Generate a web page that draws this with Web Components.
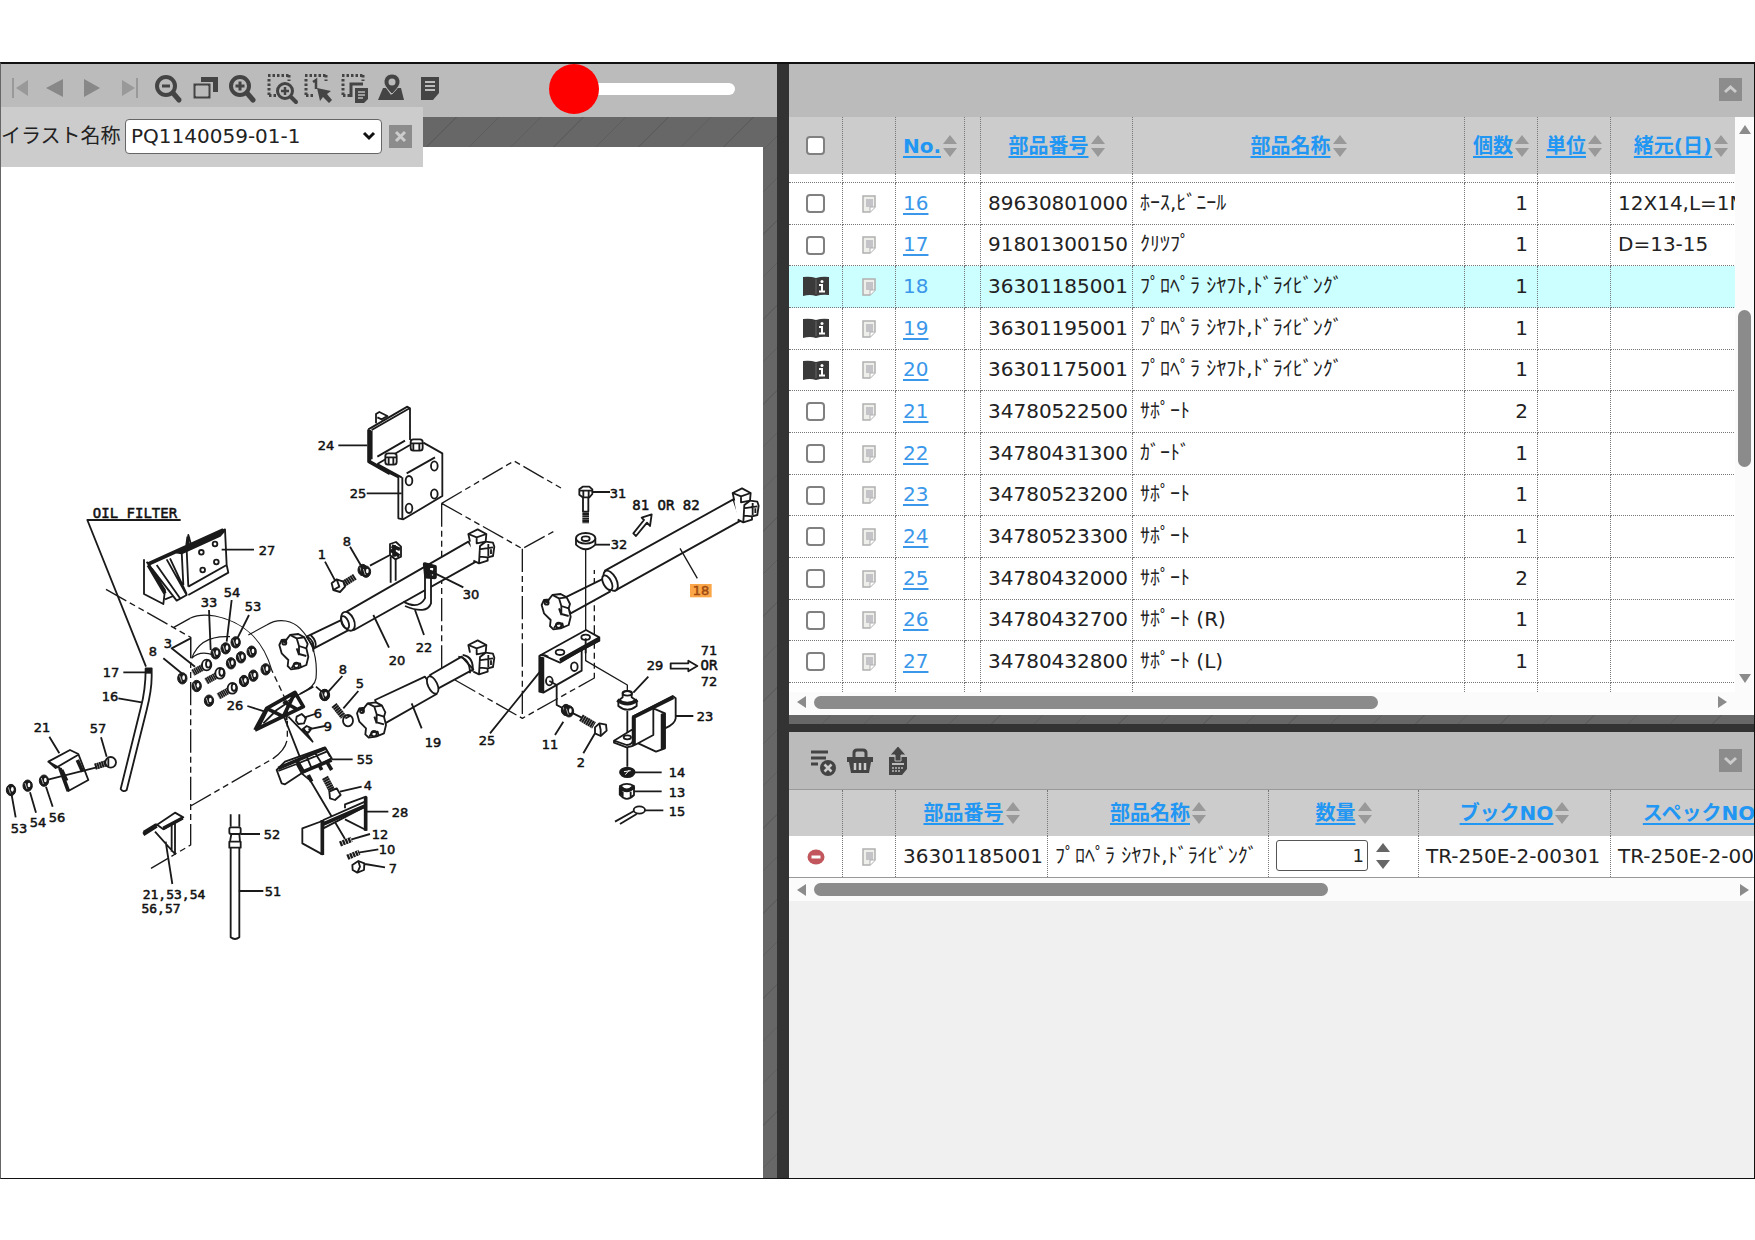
<!DOCTYPE html>
<html lang="ja">
<head>
<meta charset="utf-8">
<title>Parts catalog</title>
<style>
  html, body { height: 100%; }
  body {
    margin: 0; padding: 62px 0 61px; box-sizing: border-box; background: #fff; color: #222;
    font: 20px/28px "DejaVu Sans", "Noto Sans CJK JP", sans-serif;
  }
</style>
</head>
<body>
<catalog-app>
  <illustration-pane slot="left"></illustration-pane>
  <parts-list slot="top"></parts-list>
  <order-list slot="bottom"></order-list>
</catalog-app>

<script>
const define = (name, html, setup) => customElements.define(name, class extends HTMLElement {
  connectedCallback() {
    if (this.shadowRoot) return;
    const root = this.attachShadow({ mode: "open" });
    root.innerHTML = typeof html === "function" ? html(this) : html;
    if (setup) setup(root, this);
  }
});

/* ---------- icons ---------- */
const marquee = '<path d="M3 2.500H25M4 6V23M24 2V8M4 22.500H12" fill="none" stroke="#444" stroke-width="3" stroke-dasharray="2.500 2"/>';
const ICONS = {
  first: '<path d="M7 5V25" stroke="#999" stroke-width="2"/><path d="M22 7V23L10 15Z" fill="#999"/>',
  prev: '<path d="M20 6V24L3 15Z" fill="#888"/>',
  next: '<path d="M4 6V24L20 15Z" fill="#888"/>',
  last: '<path d="M5 7V23L18 15Z" fill="#999"/><path d="M20 5V25" stroke="#999" stroke-width="2"/>',
  zoomout: '<circle cx="12" cy="13" r="9" fill="none" stroke="#444" stroke-width="4"/><path d="M19 20L25 27" stroke="#444" stroke-width="5" stroke-linecap="round"/><path d="M8 13H16" stroke="#444" stroke-width="3"/>',
  zoomin: '<circle cx="12" cy="13" r="9" fill="none" stroke="#444" stroke-width="4"/><path d="M19 20L25 27" stroke="#444" stroke-width="5" stroke-linecap="round"/><path d="M7.500 13H16.500M12 8.500V17.500" stroke="#444" stroke-width="3"/>',
  windows: '<path d="M10 4H27V19H22V9H10Z" fill="#444"/><path d="M2 10H20V26H2ZM5 13V23H17V13Z" fill="#444" stroke="#bbb" stroke-width="1" fill-rule="evenodd"/>',
  areazoom: marquee + '<circle cx="20" cy="18" r="7.500" fill="#bbb" stroke="#444" stroke-width="3"/><path d="M26 24L31 29" stroke="#444" stroke-width="4" stroke-linecap="round"/><path d="M16 18H24M20 14V22" stroke="#444" stroke-width="2.500"/>',
  areapick: marquee + '<path d="M11 9L14 7V16" fill="none" stroke="#444" stroke-width="2.500"/><path d="M15 15L29 18L25 21L30 27L27 30L21 24L18 28Z" fill="#444"/>',
  areacopy: marquee + '<path d="M12 24V11H24" fill="none" stroke="#444" stroke-width="3"/><path d="M16 15H29V26L25 30H16Z" fill="#444"/><path d="M19 19H26M19 22H26M19 25H24" stroke="#bbb" stroke-width="1.500"/>',
  map: '<path d="M7 15L2 27H28L25 15H21L15 22L10 15Z" fill="#444"/><path d="M16 1C11 1 8 5 8 9C8 13 13 18 16 21C19 18 24 13 24 9C24 5 21 1 16 1Z" fill="#444" stroke="#bbb" stroke-width="1"/><circle cx="16" cy="9" r="3.500" fill="#bbb"/>',
  note: '<path d="M8 4H26V20L20 27H8Z" fill="#444"/><path d="M12 9H22M12 13H22M12 17H22" stroke="#bbb" stroke-width="2"/>',
  clear: '<path d="M2 6H19M2 12H17M2 18H9" stroke="#444" stroke-width="3"/><circle cx="19" cy="22" r="8" fill="#444"/><path d="M15.500 18.500L22.500 25.500M22.500 18.500L15.500 25.500" stroke="#ccc" stroke-width="2.500"/>',
  basket: '<path d="M8 13V7Q8 4 11 4H17Q20 4 20 7V13" fill="none" stroke="#444" stroke-width="3"/><path d="M1 11H27V16H25L23 27H5L3 16H1Z" fill="#444"/><path d="M9 17V24M14 17V24M19 17V24" stroke="#ccc" stroke-width="2.500"/>',
  exportfile: '<path d="M6 11H24V23L19 29H6Z" fill="#444"/><path d="M15 0L23 9H18V15H12V9H7Z" fill="#444" stroke="#bbb" stroke-width="1"/><path d="M9 18H21" stroke="#bbb" stroke-width="2"/><path d="M9 22H20M9 25H18" stroke="#bbb" stroke-width="1.500" stroke-dasharray="2 1"/>'
};

define("icon-button", el => `
  <style>
    :host { display: block; width: 30px; height: 30px; }
    button { display: block; width: 30px; height: 30px; padding: 0; border: 0; background: none; }
    svg { display: block; overflow: visible; }
  </style>
  <button type="button" aria-label="${el.getAttribute("icon")}"><svg width="30" height="30" viewBox="0 0 30 30">${ICONS[el.getAttribute("icon")]}</svg></button>`);

/* Small square button: close, collapse up, collapse down */
const MARKS = { close: "M7 7L16 16M16 7L7 16", up: "M6 14L11.500 9L17 14", down: "M6 9L11.500 14L17 9" };
define("square-button", el => `
  <style>
    :host { display: block; width: 23px; height: 23px; }
    button { display: block; width: 23px; height: 23px; padding: 0; border: 0; background: #8c8c8c; }
    svg { display: block; }
  </style>
  <button type="button" aria-label="${el.getAttribute("mark")}"><svg width="23" height="23" viewBox="0 0 23 23"><path d="${MARKS[el.getAttribute("mark")]}" fill="none" stroke="#ccc" stroke-width="3"/></svg></button>`);

define("tool-bar", `
  <style>
    :host { display: flex; align-items: center; box-sizing: border-box; height: 53px; background: #bbb; }
  </style><slot></slot>`);

define("sort-link", `
  <style>
    :host { display: inline-flex; align-items: center; gap: 2px; white-space: nowrap; }
    a { color: #2196f3; font-weight: bold; text-underline-offset: 3px; }
    svg { display: block; flex: none; }
  </style>
  <a href="#sort"><slot></slot></a>
  <svg width="14" height="22" viewBox="0 0 14 22" fill="#999"><path d="M0 9L7 0L14 9ZM0 13H14L7 22Z"/></svg>`);

define("scroll-bar", `
  <style>
    :host { display: flex; align-items: center; gap: 7px; height: 23px; padding: 0 8px; box-sizing: border-box; background: #fbfbfb; }
    :host([vertical]) { flex-direction: column; width: 19px; height: auto; padding: 7px 0 8px; }
    svg { flex: none; display: block; }
    :host([vertical]) svg { transform: rotate(90deg); }
    .track { flex: 1; display: flex; width: 100%; min-height: 0; }
    .thumb { height: 13px; width: var(--size); border-radius: 7px; background: #8b8b8b; }
    :host([vertical]) .track { flex-direction: column; align-items: center; }
    :host([vertical]) .lead { height: var(--start); }
    :host([vertical]) .thumb { width: 13px; height: var(--size); }
  </style>
  <svg width="10" height="12"><path d="M9 0V12L0 6Z" fill="#8b8b8b"/></svg>
  <div class="track"><div class="lead"></div><div class="thumb"></div></div>
  <svg width="10" height="12"><path d="M1 0V12L10 6Z" fill="#8b8b8b"/></svg>`);

const TABLE_CSS = `
  table { table-layout: fixed; border-spacing: 0; width: var(--table-width); }
  th, td { box-sizing: border-box; padding: 0 7px 2px; border-right: 1px dotted #777; text-align: left; font-weight: normal; white-space: nowrap; overflow: hidden; line-height: 26px; }
  th { background: #ccc; text-align: center; padding: 0; }
  td.c { text-align: center; padding: 0; }
  td.c svg, td.c input { display: block; margin: 0 auto; }
  td.n { text-align: right; padding-right: 9px; }
  a { color: #3a97ea; text-underline-offset: 3px; }
  input[type=checkbox] { appearance: none; display: block; margin: 0 auto; width: 19px; height: 19px; border: 2px solid #808080; border-radius: 4px; background: #fff; }
`;
const MEMO = '<svg width="14" height="18" viewBox="0 0 14 18"><path d="M1 1H13V12L8 17H1Z" fill="#eeeeea" stroke="#b0b0b0" stroke-width="1.500"/><path d="M4 4H11V12H4Z" fill="#c4c4c8"/><path d="M8 17V12H13" fill="#fff" stroke="#b0b0b0"/></svg>';
const BOOK = '<svg width="26" height="21" viewBox="0 0 26 21"><path d="M0 1Q7 0 13 2Q19 0 26 1V19Q19 18 13 20Q7 18 0 20Z" fill="#3a3a3a"/><path d="M13 3V18" stroke="#666" stroke-width="1"/><path d="M16 9H19V15M16 15.500H22" fill="none" stroke="#fff" stroke-width="2"/><circle cx="19" cy="5.500" r="1.500" fill="#fff"/></svg>';

/* ---------- upper right: parts table ---------- */
const SHAFT = "ﾌﾟﾛﾍﾟﾗ ｼﾔﾌﾄ,ﾄﾞﾗｲﾋﾞﾝｸﾞ";
const PARTS = [
  ["16", "89630801000", "ﾎｰｽ,ﾋﾞﾆｰﾙ", 1, "12X14,L=1M"],
  ["17", "91801300150", "ｸﾘﾂﾌﾟ", 1, "D=13-15"],
  ["18", "36301185001", SHAFT, 1, ""],
  ["19", "36301195001", SHAFT, 1, ""],
  ["20", "36301175001", SHAFT, 1, ""],
  ["21", "34780522500", "ｻﾎﾟｰﾄ", 2, ""],
  ["22", "34780431300", "ｶﾞｰﾄﾞ", 1, ""],
  ["23", "34780523200", "ｻﾎﾟｰﾄ", 1, ""],
  ["24", "34780523300", "ｻﾎﾟｰﾄ", 1, ""],
  ["25", "34780432000", "ｻﾎﾟｰﾄ", 2, ""],
  ["26", "34780432700", "ｻﾎﾟｰﾄ (R)", 1, ""],
  ["27", "34780432800", "ｻﾎﾟｰﾄ (L)", 1, ""]
];
const inBook = new Set(["18", "19", "20"]);
const edgeRow = cls => `<tr class="${cls}">${"<td></td>".repeat(9)}</tr>`;

define("parts-list", `
  <style>
    :host { display: flex; flex-direction: column; }
    tool-bar { justify-content: flex-end; padding: 0 12px 3px 0; }
    .area { display: flex; }
    .view { flex: 1; min-width: 0; overflow: hidden; --table-width: calc(100% + 17px); background: #fff; }
    ${TABLE_CSS}
    thead tr { height: 57px; }
    td { border-bottom: 1px dotted #777; }
    tbody tr { height: 42px; }
    tbody tr:nth-child(3n) { height: 41px; }
    tbody tr.before, tbody tr.after { height: 9px; }
    tbody tr.before td, tbody tr.after td { line-height: 0; }
    tr.after td { border-bottom: 0; }
    tr.on td { background: #cff; }
    tr.on a { text-decoration: none; }
    .across { --size: 63%; padding: 0 27px 3px 8px; }
  </style>
  <tool-bar><square-button mark="up"></square-button></tool-bar>
  <div class="area">
    <div class="view">
      <table>
        <colgroup><col style="width:54px"><col style="width:53px"><col style="width:69px"><col style="width:16px"><col style="width:152px"><col><col style="width:73px"><col style="width:73px"><col style="width:141px"></colgroup>
        <thead><tr>
          <th><input type="checkbox" aria-label="all"></th><th></th>
          <th><sort-link>No.</sort-link></th><th></th>
          <th><sort-link>部品番号</sort-link></th><th><sort-link>部品名称</sort-link></th>
          <th><sort-link>個数</sort-link></th><th><sort-link>単位</sort-link></th>
          <th><sort-link>緒元(日)</sort-link></th>
        </tr></thead>
        <tbody>
        ${edgeRow("before")}
        ${PARTS.map(([no, code, name, qty, spec]) => `<tr class="${no === "18" ? "on" : ""}">
          <td class="c">${inBook.has(no) ? BOOK : `<input type="checkbox" aria-label="${no}">`}</td>
          <td class="c">${MEMO}</td><td><a href="#${no}">${no}</a></td><td></td>
          <td>${code}</td><td>${name}</td><td class="n">${qty}</td><td></td><td>${spec}</td></tr>`).join("")}
        ${edgeRow("after")}
        </tbody>
      </table>
    </div>
    <scroll-bar vertical style="--start:32%;--size:30%"></scroll-bar>
  </div>
  <scroll-bar class="across"></scroll-bar>`);

/* ---------- lower right: order table ---------- */
define("order-list", `
  <style>
    :host { display: block; background: #f0f0f0; overflow: hidden; }
    tool-bar { height: 57px; padding: 0 12px 0 20px; gap: 7px; }
    square-button { margin-left: auto; }
    .view { overflow: hidden; --table-width: calc(100% + 50px); background: #fff; border-top: 1px solid #999; border-bottom: 1px solid #999; }
    ${TABLE_CSS}
    thead tr { height: 46px; }
    tbody tr { height: 41px; }
    .qty { display: flex; align-items: center; gap: 8px; }
    .qty input { box-sizing: border-box; width: 92px; height: 31px; padding: 0 3px; border: 1px solid #555; border-radius: 3px; font: inherit; font-size: 18px; color: inherit; text-align: right; }
    .qty svg { display: block; }
    .across { --size: 56%; padding: 0 5px 0 8px; }
  </style>
  <tool-bar>
    <icon-button icon="clear"></icon-button><icon-button icon="basket"></icon-button><icon-button icon="exportfile"></icon-button>
    <square-button mark="down"></square-button>
  </tool-bar>
  <div class="view">
    <table>
      <colgroup><col style="width:54px"><col style="width:53px"><col style="width:152px"><col style="width:221px"><col style="width:150px"><col><col style="width:193px"></colgroup>
      <thead><tr><th></th><th></th>
        <th><sort-link>部品番号</sort-link></th><th><sort-link>部品名称</sort-link></th>
        <th><sort-link>数量</sort-link></th><th><sort-link>ブックNO</sort-link></th><th><sort-link>スペックNO</sort-link></th>
      </tr></thead>
      <tbody><tr>
        <td class="c"><svg width="18" height="18" viewBox="0 0 18 18"><ellipse cx="9" cy="9" rx="8.500" ry="7.500" fill="#c1575c"/><path d="M4.500 9H13.500" stroke="#fff" stroke-width="3"/></svg></td>
        <td class="c">${MEMO}</td><td>36301185001</td><td>${SHAFT}</td>
        <td><div class="qty"><input type="text" value="1" aria-label="数量"><svg width="14" height="26" viewBox="0 0 14 26" fill="#666"><path d="M0 9L7 0L14 9ZM0 17H14L7 26Z"/></svg></div></td>
        <td>TR-250E-2-00301</td><td>TR-250E-2-00301</td>
      </tr></tbody>
    </table>
  </div>
  <scroll-bar class="across"></scroll-bar>`);

/* ---------- exploded view drawing ---------- */
const LABELS = [
  ["24",326,445],["25",358,493],["8",347,541],["1",322,554],["30",471,594],["22",424,647],["20",397,660],["8",343,669],["5",360,683],["6",318,713],["19",433,742],
  ["31",618,493],["81 OR 82",666,505],["32",619,544],["18",701,590],["71",709,650],["29",655,665],["OR",709,665],["72",709,681],["23",705,716],["11",550,744],["2",581,762],["14",677,772],["13",677,792],["15",677,811],["25",487,740],
  ["OIL FILTER",135,513],["27",267,550],["54",232,592],["33",209,602],["53",253,606],["3",168,643],["8",153,651],["17",111,672],["16",110,696],["26",235,705],["9",328,726],
  ["21",42,727],["57",98,728],["53",19,828],["54",38,822],["56",57,817],["55",365,759],["4",368,785],["28",400,812],["12",380,834],["10",387,849],["7",393,868],["52",272,834],["51",273,891],["21,53,54",174,894],["56,57",161,908]
];
const use = (id, pts) => pts.map(([x, y]) => `<use href="#${id}" x="${x}" y="${y}"/>`).join("");
const textClass = t => (t === "18" ? "hot" : /^\d+$/.test(t) ? "num" : t.includes(",") ? "list" : "word");

define("exploded-view", `
  <style>
    :host { display: block; background: #fff; overflow: hidden; }
    svg { display: block; width: 100%; height: 100%; }
    .ink { fill: none; stroke: #1a1a1a; stroke-width: 5.500; stroke-linejoin: round; }
    .ph { stroke-width: 4; stroke-dasharray: 70 12 18 12 18 12; }
    .w { fill: #fff; }
    .b { stroke-width: 11; }
    text { font: 13px/13px "DejaVu Sans", sans-serif; fill: #111; stroke: #111; stroke-width: .5px; text-anchor: middle; }
    text.word { font: 14px/14px "DejaVu Sans Mono", monospace; }
    text.list { font: 13px/13px "DejaVu Sans Mono", monospace; }
    text.hot { fill: #a04a10; stroke: #a04a10; }
  </style>
  <svg viewBox="1 147 762 1030" preserveAspectRatio="xMinYMin meet" role="img" aria-label="PQ1140059-01-1">
    <defs>
      <g id="yl"><path class="w" d="M-47-15L-40-30L-25-32L-15-45L10-48L28-38L38-18L34-5L40 20L34 45L10 55L-12 58L-22 48L-20 30L-40 10Z"/><path d="M-15-45L5-35L28-38M5-35L12-12L34-5M12-12V12L34 18M-40-30L-30-22L-25-32M-10 55L-2 42L15 40L18 52M5-5L12 15"/><circle cx="-32" cy="-22" r="6"/><circle cx="4" cy="46" r="8"/></g>
      <g id="yr"><path class="w" d="M-35-15L-40-38L-12-52L14-38L12-15L34-12L38 0L34 28L18 32L18 42L-8 50L-25 42"/><path d="M-40-38L-15-28L14-38M-15-28V-10L12-15M12-15L-5-2L-8 50M-8 8L34 2M20-8V28M-5 30L18 32M28 8V22"/></g>
      <g id="ws"><ellipse rx="14" ry="17" fill="#1a1a1a" stroke-width="3"/><ellipse cx="4" cy="-2" rx="4" ry="7" fill="#fff" stroke="none"/><path d="M-8-8L-2 10" stroke="#fff" stroke-width="2"/></g>
      <g id="bt"><path d="M-10 6L-42 24" stroke-width="20" stroke-dasharray="5 1"/><ellipse class="w" rx="14" ry="16"/><ellipse cx="5" cy="-3" rx="7" ry="11"/></g>
    </defs>
    <g class="ink" transform="translate(0 490) scale(.3333333)">
      <path d="M542 90H262L438 530"/>
      <path class="ph" d="M318 298L572 442V1065L453 1135M572 948L820 805Q862 775 862 740V640L815 540M520 413L570 385"/>
      <path d="M570 385Q600 370 645 378C730 395 790 450 815 540M745 435L800 405C840 380 880 395 900 415C945 460 952 520 948 565Q945 590 900 612L860 635M575 505Q600 435 690 440M575 505Q600 480 640 495M572 442V505" stroke-width="3.500"/>
      <path d="M432 208V312L490 342L495 300L440 215M445 222L675 118L680 225L565 290M455 235L530 332L560 315L500 208M470 225L540 325M510 205L560 312M545 185L550 285M560 180L565 290M565 315L685 248L680 225M560 178L565 135L575 170M495 328L520 318"/>
      <path class="b" d="M445 222L670 120M445 225L495 310M560 178L565 140"/><path class="w" d="M530 188L672 124L660 138L545 190Z" style="fill:#1a1a1a"/>
      <circle cx="604" cy="187" r="7"/><circle cx="645" cy="162" r="7"/><circle cx="608" cy="240" r="7"/><circle cx="649" cy="216" r="7"/>
      <path d="M665 179H762M490 505L545 550M570 446L515 475L585 530M627 360L632 480M695 330L680 455M747 375L712 445M370 547H435M355 625L425 637M742 648L795 665"/>
      <path class="w" d="M437 535H455V560Q455 600 440 660L380 900Q370 908 362 897L422 655Q437 600 437 535Z"/><path d="M437 543H455" stroke-width="16"/>
      ${use("ws", [[647,490],[677,475],[707,457],[693,520],[723,502],[755,485],[732,573],[760,557],[797,538],[547,565],[590,588],[627,632],[975,615]])}
      ${use("bt", [[620,525],[660,550],[697,595]])}
      <path class="b" d="M765 720L800 655L885 607L910 650L765 720M800 655L850 680L885 607M775 710L800 660M850 635L895 660"/>
      <path d="M790 700L830 660L860 640M850 675L905 815M865 680L938 755L910 715M860 660V690M948 590L968 607M940 590L900 612M890 680L905 672L918 684L912 700L895 702L888 692ZM912 683L945 672M925 718L975 708M905 720L920 708L935 715L925 728Z"/>
    </g>
    <g class="ink" transform="translate(0 690) scale(.3333333)">
      <path class="w" d="M145 215L210 180L235 192L265 270L205 303L180 235ZM145 215L167 234L235 194"/>
      <path class="b" d="M185 240L200 272M232 210L248 245M180 235L205 303"/>
      <path d="M132 272L290 232M148 140L178 190M303 142L320 200M138 290L158 350M90 307L108 368M35 315L47 382"/>
      <path d="M285 230L318 220" stroke-width="19" stroke-dasharray="6 1"/><circle class="w" cx="332" cy="217" r="16"/><path d="M325 205V230"/>
      ${use("ws", [[132,272],[83,287],[33,300]])}
      <path d="M430 432L525 368L550 382L490 418L468 402M515 405V485M525 400V492L465 425M497 455L517 582M430 425L468 402"/><path class="b" d="M430 433L470 408M490 415L548 384"/>
      <path d="M692 373V410M718 373V410M692 475V742Q705 752 718 742V475M688 455H722V473H688ZM694 432L690 455M718 432L720 455M715 603H790M722 432H780"/><rect x="688" y="412" width="34" height="20" rx="5"/>
      <path class="w" d="M830 240L855 215L975 172L995 205L905 250L855 283L845 280Z"/>
      <path d="M835 243L890 222L905 250M890 222L980 185M920 200L935 235M945 190L965 220M975 172L990 200M905 250L935 275M995 208H1058M1020 305L1085 290M930 270L1035 447"/><path class="b" d="M835 235L975 175M890 210L910 245L995 210M925 255L935 275M980 215L995 240M955 220L965 240"/>
      <path d="M975 262L996 302" stroke-width="20" stroke-dasharray="6 1"/><path class="w" d="M988 305L1010 295L1022 315L1005 330L990 325Z"/>
      <path class="w" d="M907 415L967 393V493L907 460ZM970 390L1095 335V350L970 415ZM1035 355V343L1098 320V420L1035 388"/><path class="b" d="M967 390V495M1097 320V422M970 402L1095 348"/>
      <path d="M1098 365H1165M1055 448L1110 432M1075 488L1135 478M1095 522L1155 532M1057 525L1075 513L1093 520L1092 540L1072 548L1058 540Z"/><path d="M1020 462L1055 448M1042 502L1078 487" stroke-width="16" stroke-dasharray="7 2"/><path d="M1075 513L1080 530L1072 548"/>
      <path d="M1002 45L1030 80" stroke-width="19" stroke-dasharray="6 1"/><ellipse class="w" cx="1044" cy="92" rx="15" ry="17"/><path d="M1036 85L1050 78"/>
    </g>
    <g class="ink" transform="translate(290 390) scale(.3333333)">
      <path d="M235 118L352 50L360 55V150M235 118V215L265 230M245 122V208M245 120L360 54M258 100V72L268 66L292 78L275 88L262 82M262 200L345 152M262 222L360 165M262 222L335 262M265 232L325 262V385L340 388L457 318V190L400 158M337 262V385M350 250L435 202"/>
      <path class="b" d="M238 120V215L300 250"/>
      <rect class="w" x="362" y="148" width="36" height="34" rx="8"/><path d="M362 160H398M370 160V180M388 160V180"/><rect class="w" x="286" y="190" width="34" height="34" rx="8"/><path d="M286 202H320M296 202V222M310 202V222"/>
      <ellipse cx="357" cy="272" rx="10" ry="14"/><ellipse cx="433" cy="228" rx="10" ry="14"/><ellipse cx="433" cy="312" rx="10" ry="14"/><ellipse cx="357" cy="355" rx="10" ry="14"/>
      <path class="ph" d="M455 340L672 213L818 297M455 340L697 476L790 425M697 476V985M455 340V840M495 870L697 985L913 864V540"/>
      <path d="M145 166H232M230 310H335M105 515L137 575M180 470L212 525M240 527L300 495M302 500V578M317 505V572"/>
      <path d="M300 462L318 456L333 470V500L316 508L300 496Z"/><path class="b" d="M302 480L328 498M305 468L330 478M312 465V500"/>
      <path d="M160 582L195 560" stroke-width="20" stroke-dasharray="6 1"/><path class="w" d="M125 580L140 568L160 575L165 590L150 606L130 600Z"/><path d="M140 568L148 590L130 600"/>${use("ws", [[218,540],[228,545],[103,915]])}
      <path class="w" d="M165 668L535 455L570 508L192 720Z"/><path class="w" d="M50 740L158 688L180 718L72 775Z"/>
      <ellipse class="w" cx="174" cy="694" rx="18" ry="30" transform="rotate(-25 174 694)"/><ellipse cx="165" cy="697" rx="10" ry="20" transform="rotate(-25 165 697)"/>
      <path d="M50 740Q75 750 70 785M62 735Q82 755 76 772"/>
      ${use("yr", [[575,470],[575,803]])}
      <path class="w" d="M340 635Q385 660 405 625V545H423V640Q410 675 345 648"/><path class="b" d="M404 522L435 530V562L408 560ZM405 540L435 550M415 522V565"/>
      <path d="M435 550L520 592M375 660L402 735M250 675L297 773M157 858L115 905M205 903L160 955M750 845L600 1030"/>
      <path class="w" d="M255 930L405 860L440 912L285 1000Z"/><path class="w" d="M420 855L515 800L550 838L445 895Z"/><ellipse class="w" cx="428" cy="885" rx="14" ry="28" transform="rotate(-25 428 885)"/><path d="M505 800Q540 805 540 850M518 795Q552 800 548 845M365 940L395 1015"/>
      ${use("yl", [[15,780],[248,985]])}
    </g>
    <g class="ink" transform="translate(500 450) scale(.3333333)">
      <path class="w" d="M238 118L248 110H268L277 118V132L268 142H248L238 134Z"/><path d="M238 122H277M250 122V142M266 122V142M249 142V185M265 142V185M278 126H330"/><path d="M257 182V220" stroke-width="20" stroke-dasharray="6 1"/>
      <path class="w" d="M228 265V284Q257 312 286 284V265"/><ellipse class="w" cx="257" cy="265" rx="29" ry="16"/><ellipse cx="257" cy="266" rx="12" ry="7"/><path d="M286 284H330"/>
      <path d="M400 250L432 210L425 203L455 193L450 228L441 218L408 258Z"/>
      <path class="w" d="M315 362L700 148L722 212L345 422Z"/><path class="w" d="M190 445L312 385L330 425L212 490Z"/>
      <ellipse class="w" cx="332" cy="392" rx="17" ry="33" transform="rotate(-28 332 392)"/><ellipse class="w" cx="322" cy="398" rx="12" ry="24" transform="rotate(-28 322 398)"/>
      <path d="M257 300V632L382 705V730M540 295L592 385" stroke-width="4"/>
      ${use("yr", [[738,167]])}${use("yl", [[172,480]])}
      <path class="w" d="M118 618V725L130 728L245 662V600L298 572V562L258 540L128 612Z"/><path d="M128 615L180 638L298 568M118 618Q128 610 145 620M130 622V728M180 628L298 562"/><path class="b" d="M124 620V725M180 633L298 568"/>
      <ellipse cx="180" cy="607" rx="13" ry="8"/><ellipse cx="257" cy="562" rx="13" ry="8"/><ellipse cx="148" cy="693" rx="10" ry="13"/><ellipse cx="223" cy="650" rx="10" ry="13"/>
      <path d="M148 693L170 705V765L190 775M215 788L245 803M190 815L165 855M285 850L250 910M257 565V610"/>${use("ws", [[198,780],[207,784]])}
      <path d="M243 803L282 826" stroke-width="22" stroke-dasharray="6 1"/><path class="w" d="M285 832L298 820L318 824L320 842L302 858L285 850Z"/><path d="M298 820L302 840L302 858"/>
      <path d="M445 680L400 728M512 640H565V632L592 648L565 664V656H512ZM382 782V862M382 892V950M505 798H580M405 967H485M402 1024H485M435 1081H490"/>
      <path class="w" d="M355 752V768Q382 790 410 768V752L395 742V728Q382 718 368 728V742Z"/><path class="b" d="M352 750Q382 772 412 750"/><ellipse cx="382" cy="730" rx="14" ry="7"/>
      <path class="w" d="M398 800L518 738L527 745V805Q525 822 495 835M398 838L342 872V878L380 892Q398 890 410 882L460 855V775M398 800V878M460 775L495 790V895L468 905L415 880M485 792V898"/><path class="b" d="M402 803V885M398 803L520 742M490 790V895"/><path d="M342 872L380 885Q395 885 400 870"/><ellipse cx="382" cy="862" rx="11" ry="6"/>
      <ellipse cx="382" cy="967" rx="22" ry="14" fill="#1a1a1a"/><path d="M372 965L392 962M376 974L388 960" stroke="#fff" stroke-width="3"/>
      <path d="M360 1008Q380 995 402 1008V1035Q380 1058 360 1035ZM368 1025V1045M392 1025V1045"/><path class="b" d="M360 1010Q380 1032 402 1010M362 1015V1035"/>
      <ellipse cx="418" cy="1080" rx="17" ry="11"/><path d="M345 1115L402 1083M360 1122L410 1092"/>
      <path d="M570 402H635V442H570Z" fill="#fba648" stroke="none"/>
    </g>
    ${LABELS.map(([t, x, y]) => `<text class="${textClass(t)}" x="${x}" y="${y + 5}">${t}</text>`).join("")}
  </svg>`);

/* ---------- left pane ---------- */
define("illustration-pane", `
  <style>
    :host { display: flex; flex-direction: column; position: relative; min-width: 0;
      background: repeating-linear-gradient(135deg, #676767 0 29px, #5e5e5e 29px 30px); }
    tool-bar { gap: 7px; padding: 0 42px 5px 5px; flex: none; }
    .zoom { appearance: none; margin: 2px 0 0 auto; width: 186px; height: 50px; background: none; }
    .zoom::-webkit-slider-runnable-track { height: 12px; border-radius: 6px; background: #fff; }
    .zoom::-webkit-slider-thumb { appearance: none; width: 50px; height: 50px; margin-top: -19px; border-radius: 50%; background: #f00; }
    .name { position: absolute; left: 0; top: 43px; display: flex; align-items: center; box-sizing: border-box; height: 60px; padding: 0 11px 2px 0; background: #ccc; color: #222; }
    .name label { width: 124px; text-align: left; }
    .box { display: grid; align-items: center; }
    .box > * { grid-area: 1 / 1; }
    .box svg { justify-self: end; margin-right: 6px; pointer-events: none; }
    select { appearance: none; box-sizing: border-box; width: 257px; height: 35px; padding: 0 5px; border: 1px solid #666; border-radius: 4px; background: #fff; font: inherit; color: #222; }
    square-button { margin-left: 7px; }
    exploded-view { flex: 1; min-height: 0; margin: 30px 14px 0 0; }
  </style>
  <tool-bar>
    ${["first","prev","next","last","zoomout","windows","zoomin","areazoom","areapick","areacopy","map","note"].map(i => `<icon-button icon="${i}"></icon-button>`).join("")}
    <input class="zoom" type="range" min="0" max="100" value="0" aria-label="zoom">
  </tool-bar>
  <exploded-view></exploded-view>
  <div class="name">
    <label for="illust">イラスト名称</label>
    <div class="box"><select id="illust"><option>PQ1140059-01-1</option></select>
      <svg width="14" height="10"><path d="M2 2L7 7L12 2" fill="none" stroke="#111" stroke-width="3"/></svg></div>
    <square-button mark="close"></square-button>
  </div>`);

define("catalog-app", `
  <style>
    :host { display: grid; grid-template-columns: 776fr 965fr; column-gap: 12px; box-sizing: border-box; height: 100%;
      border: 1px solid #111; border-left-color: #666; border-top-width: 2px; background: #333; }
    .right { display: flex; flex-direction: column; min-width: 0; min-height: 0; }
    .gap { height: 9px; flex: none; margin-bottom: 8px; background: repeating-linear-gradient(135deg, #676767 0 29px, #5e5e5e 29px 30px); }
    ::slotted([slot=bottom]) { flex: 1; min-height: 0; }
    ::slotted([slot=left]) { min-height: 0; }
  </style>
  <slot name="left"></slot>
  <div class="right"><slot name="top"></slot><div class="gap"></div><slot name="bottom"></slot></div>`);
</script>
</body>
</html>
